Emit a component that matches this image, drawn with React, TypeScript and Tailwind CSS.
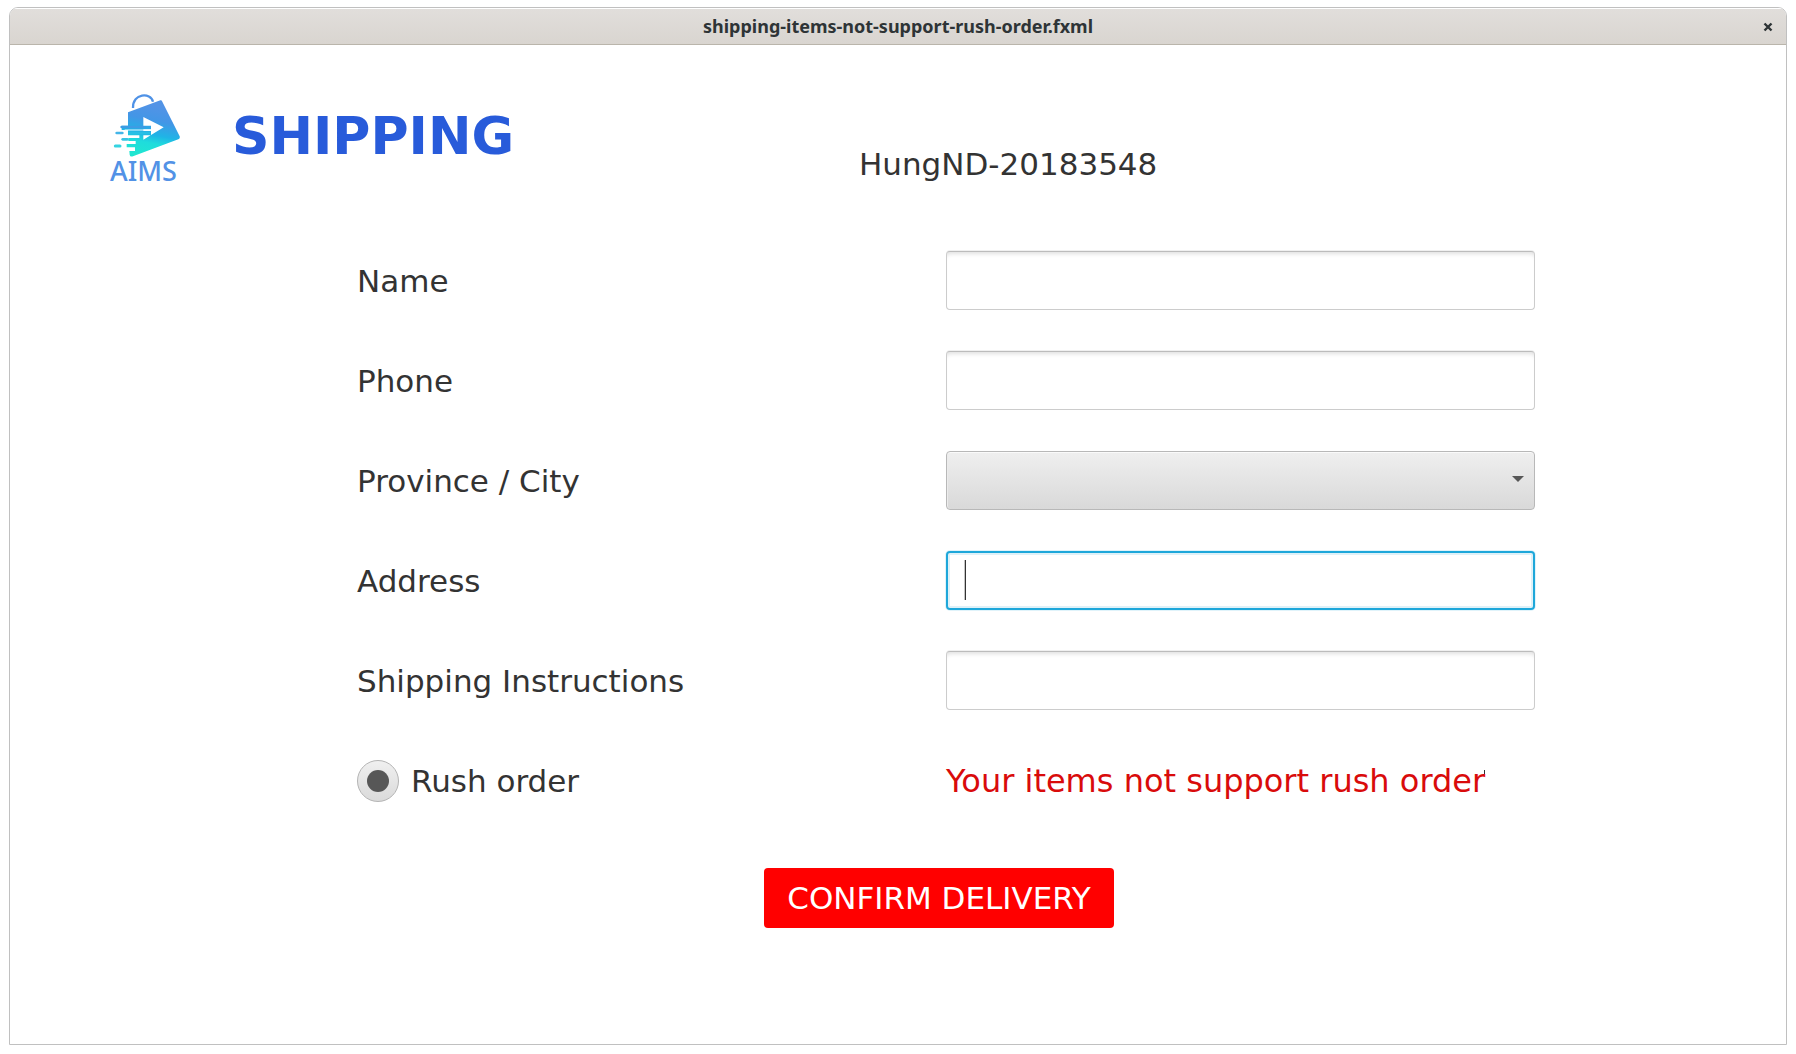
import React from "react";

const fieldBase =
  "block h-[59px] w-full rounded-[4px] border bg-white px-4 text-[31px] text-[#333333] outline-none";
const fieldIdle =
  "border-[#cccccc] border-t-[#bcbcbc] shadow-[inset_0_5px_4px_-3px_rgba(0,0,0,0.12),0_-1px_0_rgba(0,0,0,0.06)]";
const fieldFocused =
  "border-2 border-[#1ea7da] shadow-[inset_0_0_0_2px_#dff1f8,0_0_0_1px_rgba(3,158,211,0.12)]";

function Logo() {
  return (
    <div className="flex w-[70px] flex-col items-start">
      <svg viewBox="60 35 210 195" className="h-[65px] w-[70px]" aria-hidden="true">
        <defs>
          <linearGradient id="bag" x1="0.6" y1="0" x2="0.4" y2="1">
            <stop offset="0.1" stopColor="#5293e6" />
            <stop offset="0.35" stopColor="#4396e6" />
            <stop offset="0.6" stopColor="#1fb4e6" />
            <stop offset="0.75" stopColor="#1fdcdc" />
            <stop offset="1" stopColor="#20e6d0" />
          </linearGradient>
        </defs>
        <path d="M129 80 C128 35 182 32 189 61" fill="none" stroke="#4f92e6" strokeWidth="7" />
        <path
          d="M114 93 L211 57 Q215 56 217 61 L269 165 Q271 171 265 174 L129 225 Q120 228 119 220 L118 209 H135 V198 H110 V188 H137 V179 H115 V170 H148 V162 H114 V146 H95 V133 H114 Z"
          fill="url(#bag)"
        />
        <path d="M95 137 H162" stroke="#3d9ce4" strokeWidth="8" strokeLinecap="round" />
        <path d="M160 107 L221 138 L160 175 V162 H183 V158 H183 V149 H160 V144 H183 V133 H160 Z" fill="#fff" />
        <path d="M104 146 H184" stroke="#e8faff" strokeWidth="3" />
        <path d="M117 155 H181" stroke="#28bfe5" strokeWidth="7" />
        <path d="M80 155 H97" stroke="#43b5e8" strokeWidth="8" strokeLinecap="round" />
        <path d="M98 174 H112" stroke="#38c3e4" strokeWidth="8" strokeLinecap="round" />
        <path d="M76 194 H90" stroke="#35d4e1" strokeWidth="9" strokeLinecap="round" />
      </svg>
      <span className="font-['Noto_Sans',sans-serif] text-[27px] leading-[26px] font-medium text-[#5292e6]">
        AIMS
      </span>
    </div>
  );
}

function FieldLabel({ id, children }: { id: string; children: React.ReactNode }) {
  return (
    <label htmlFor={id} className="flex h-[60px] items-center">
      {children}
    </label>
  );
}

export default function App() {
  return (
    <div className="flex min-h-screen bg-white px-[9px] pt-[7px] pb-[9px] font-['DejaVu_Sans',sans-serif] text-[31px] text-[#333333]">
      <div className="flex w-full flex-col overflow-hidden rounded-t-[9px] border border-[#c0c0c0] bg-white">
        <header className="relative flex h-[37px] items-center justify-center border-t border-b border-t-white border-b-[#bab5ab] bg-linear-to-b from-[#e1dedb] to-[#d9d5d0]">
          <h2 className="font-['Noto_Sans',sans-serif] text-[18px] font-bold text-[#2e3436]">
            shipping-items-not-support-rush-order.fxml
          </h2>
          <button type="button" aria-label="Close" className="absolute right-[13px] flex size-[10px]">
            <svg viewBox="0 0 10 10" className="size-[10px]">
              <path d="M1.5 1.5 L8.5 8.5 M8.5 1.5 L1.5 8.5" stroke="#2e3436" strokeWidth="2.4" />
            </svg>
          </button>
        </header>

        <main className="flex-1">
          <div className="flex items-start pt-12 pl-[100px]">
            <Logo />
            <h1 className="ml-[52px] w-[627px] pt-[13px] text-[52px] leading-[60px] font-bold text-[#285bda]">
              SHIPPING
            </h1>
            <p className="pt-[51px] leading-10">HungND-20183548</p>
          </div>

          <form className="pt-[67px] pr-[251px] pl-[347px]" onSubmit={(e) => e.preventDefault()}>
            <div className="grid grid-cols-2 gap-y-10">
              <FieldLabel id="name">Name</FieldLabel>
              <input id="name" type="text" className={`${fieldBase} ${fieldIdle}`} />

              <FieldLabel id="phone">Phone</FieldLabel>
              <input id="phone" type="text" className={`${fieldBase} ${fieldIdle}`} />

              <FieldLabel id="province">Province / City</FieldLabel>
              <div className="relative">
                <select
                  id="province"
                  defaultValue=""
                  className="block h-[59px] w-full appearance-none rounded-[4px] border border-[#b8b8b8] bg-linear-to-b from-[#efefef] to-[#d9d9d9] px-4 shadow-[inset_0_1px_0_#fafafa,inset_1px_0_0_#ececec]"
                >
                  <option value=""></option>
                </select>
                <svg
                  viewBox="0 0 12 6"
                  className="pointer-events-none absolute top-[25px] right-[11px] h-[6px] w-3"
                  aria-hidden="true"
                >
                  <path d="M0 0 H12 L6 6 Z" fill="#575757" />
                </svg>
              </div>

              <FieldLabel id="address">Address</FieldLabel>
              <div className="relative">
                <input id="address" type="text" className={`${fieldBase} ${fieldFocused}`} />
                <span className="pointer-events-none absolute top-[9px] left-[18px] h-10 w-[2px] border-l border-[#c4c4c4] bg-[#333333]" />
              </div>

              <FieldLabel id="instructions">Shipping Instructions</FieldLabel>
              <input id="instructions" type="text" className={`${fieldBase} ${fieldIdle}`} />

              <label className="flex h-[60px] items-center gap-3">
                <input
                  type="radio"
                  name="rush"
                  defaultChecked
                  className="grid size-[42px] appearance-none place-items-center rounded-full border border-[#b4b4b4] bg-linear-to-b from-[#f0f0f0] to-[#dadada] before:size-[22px] before:rounded-full checked:before:bg-[#575757]"
                />
                Rush order
              </label>
              <p className="flex h-[60px] items-center text-[32px] whitespace-nowrap text-[#d90b0b]">
                <span className="relative">
                  Your items not support rush order
                  <span className="absolute top-[13px] right-0 h-1 w-px bg-[#333333]" />
                </span>
              </p>
            </div>

            <div className="flex pt-[57px] pl-[407px]">
              <button
                type="submit"
                className="h-[60px] w-[350px] rounded-[4px] bg-[#ff0000] whitespace-nowrap text-white"
              >
                CONFIRM DELIVERY
              </button>
            </div>
          </form>
        </main>
      </div>
    </div>
  );
}
